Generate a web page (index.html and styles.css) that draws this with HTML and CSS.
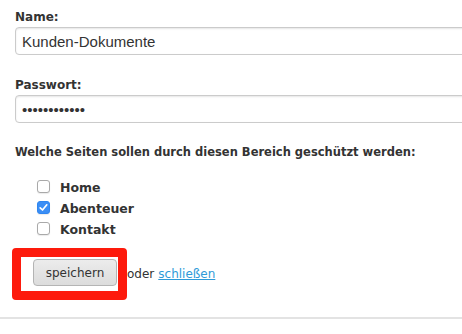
FILE: index.html
```html
<!DOCTYPE html>
<html lang="de">
<head>
<meta charset="utf-8">
<title>Bereich</title>
<link rel="stylesheet" href="styles.css">
</head>
<body>
<form class="page">
  <div class="field">
    <label class="label" for="name">Name:</label>
    <input class="input" id="name" type="text" value="Kunden-Dokumente">
  </div>
  <div class="field field-gap">
    <label class="label" for="pw">Passwort:</label>
    <input class="input" id="pw" type="password" value="123456789012">
  </div>
  <p class="question">Welche Seiten sollen durch diesen Bereich geschützt werden:</p>
  <ul class="pages">
    <li class="row"><input class="check" type="checkbox" id="c1"><label for="c1">Home</label></li>
    <li class="row"><input class="check" type="checkbox" id="c2" checked><label for="c2">Abenteuer</label></li>
    <li class="row"><input class="check" type="checkbox" id="c3"><label for="c3">Kontakt</label></li>
  </ul>
  <div class="actions">
    <span class="highlight"><button class="button" type="button">speichern</button></span><span class="or">oder</span><a class="link" href="#">schließen</a>
  </div>
</form>
<div class="rule"></div>
</body>
</html>
```
FILE: styles.css
```css
html, body {
  margin: 0;
  padding: 0;
  background: #fff;
  overflow: hidden;
}
body {
  font-family: "DejaVu Sans", Verdana, sans-serif;
  color: #333;
}
.page {
  padding: 9px 0 0 15px;
  overflow: hidden;
}
.field {
  display: flex;
  flex-direction: column;
  gap: 2px;
}
.field-gap {
  margin-top: 22px;
}
.label {
  font-size: 12px;
  font-weight: bold;
  line-height: 16px;
  color: #333;
}
.input {
  box-sizing: border-box;
  width: calc(100% + 20px);
  height: 28px;
  margin: 0;
  padding: 0 6px;
  border: 1px solid #cbcbcb;
  border-radius: 4px;
  box-shadow: inset 0 1px 2px rgba(0,0,0,0.10);
  font-family: "Liberation Sans", Arial, sans-serif;
  font-size: 15px;
  color: #333;
  background: #fff;
}
.question {
  margin: 21px 0 0;
  font-size: 11.5px;
  font-weight: bold;
  line-height: 16px;
}
.pages {
  list-style: none;
  margin: 16px 0 0 22px;
  padding: 0;
}
.row {
  display: flex;
  align-items: center;
  gap: 10px;
  height: 21px;
  font-size: 12.5px;
  font-weight: bold;
}
.row label {
  position: relative;
  top: 1px;
}
.check {
  appearance: none;
  -webkit-appearance: none;
  box-sizing: border-box;
  width: 13px;
  height: 13px;
  margin: 0;
  border: 1px solid #a9a9a9;
  border-radius: 3px;
  background: #fff;
  box-shadow: 0 1px 1px rgba(0,0,0,0.08);
}
.check:checked {
  border-color: #2f86f0;
  background: #3b8ef5 url("data:image/svg+xml;utf8,<svg xmlns='http://www.w3.org/2000/svg' viewBox='0 0 13 13'><path d='M3.2 6.8 L5.5 9 L9.8 3.8' fill='none' stroke='white' stroke-width='1.7' stroke-linecap='round' stroke-linejoin='round'/></svg>") center/13px 13px no-repeat;
}
.actions {
  display: flex;
  align-items: center;
  margin-top: 9px;
  margin-left: -3px;
  font-size: 12px;
}
.highlight {
  display: flex;
  padding: 2px 1px 5px 12px;
  border: 9px solid #fd1a0c;
  border-radius: 4px;
}
.button {
  box-sizing: border-box;
  width: 84px;
  height: 27px;
  margin: 0;
  padding: 0;
  border: 1px solid #b4b4b4;
  border-radius: 4px;
  background: linear-gradient(#ececec, #dcdcdc);
  font-family: "DejaVu Sans", Verdana, sans-serif;
  font-size: 12px;
  color: #333;
}
.or {
  margin-left: 0;
  margin-right: 4px;
}
.link {
  color: #2f9ad8;
  text-decoration: underline;
}
.rule {
  margin-top: 17px;
  border-top: 2px solid #e3e3e3;
}
```
